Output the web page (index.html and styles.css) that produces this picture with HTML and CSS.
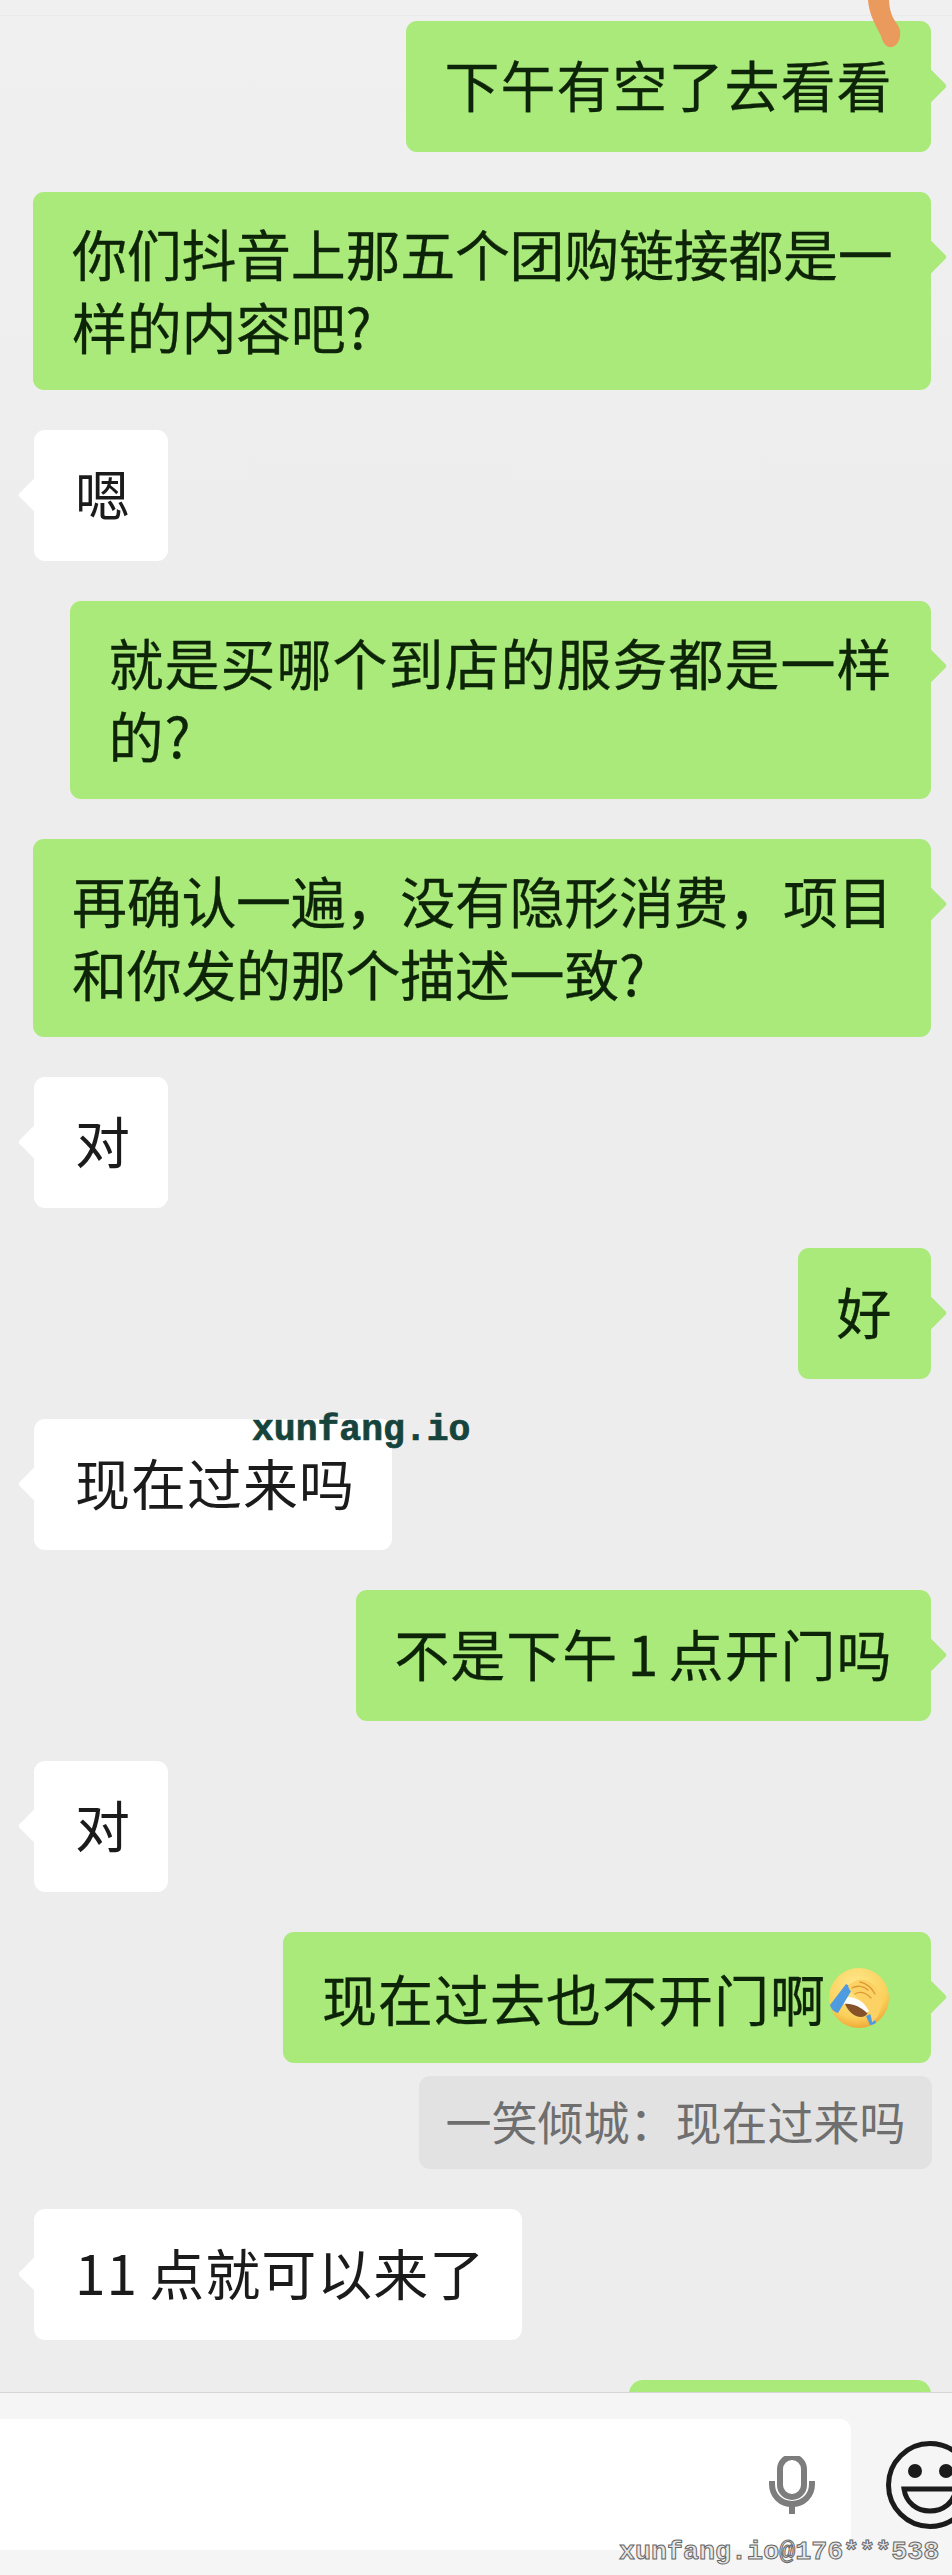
FILE: index.html
```html
<!DOCTYPE html>
<html lang="zh-CN">
<head>
  <meta charset="UTF-8">
  <title>聊天记录</title>
  <meta name="viewport" content="width=device-width, initial-scale=1">
  <link rel="stylesheet" href="styles.css">
</head>
<body>

  <div class="page">
    <div class="chat">
      <div class="topline"></div>

      <div class="msg sent"><div class="bubble">下午有空了去看看</div></div>
      <div class="msg sent"><div class="bubble tight two">你们抖音上那五个团购链接都是一<br>样的内容吧?</div></div>
      <div class="msg received"><div class="bubble">嗯</div></div>
      <div class="msg sent"><div class="bubble two">就是买哪个到店的服务都是一样<br>的?</div></div>
      <div class="msg sent"><div class="bubble tight two">再确认一遍，没有隐形消费，项目<br>和你发的那个描述一致?</div></div>
      <div class="msg received"><div class="bubble">对</div></div>
      <div class="msg sent"><div class="bubble">好</div></div>
      <div class="msg received"><div class="bubble">现在过来吗</div></div>
      <div class="msg sent"><div class="bubble spaced">不是下午 1 点开门吗</div></div>
      <div class="msg received"><div class="bubble">对</div></div>
      <div class="msg sent">
        <div class="bubble with-emoji">现在过去也不开门啊<svg class="emoji" viewBox="0 0 60 60">
            <defs>
              <radialGradient id="face" cx="45%" cy="30%" r="75%">
                <stop offset="0" stop-color="#fee98f"/>
                <stop offset="0.7" stop-color="#fbd05a"/>
                <stop offset="1" stop-color="#ee9f30"/>
              </radialGradient>
            </defs>
            <circle cx="30" cy="30" r="30" fill="url(#face)"/>
            <path d="M15 33 C22 29 33 34 39 44 C36 53 20 50 15 33 Z" fill="#85522a"/>
            <path d="M14 29 C24 28 35 33 41 42 L38 45 C32 39 23 35 15 36 Z" fill="#fff"/>
            <path d="M1 37 L17 16 L24 20 L9 45 C5 44 2 41 1 37 Z" fill="#4f9be0"/>
            <path d="M37 48 L44 45 L47 55 C45 56 43 57 41 57 Z" fill="#4f9be0"/>
            <path d="M19 18 C23 14 30 10 36 12 C43 14 49 19 52 26 C54 33 52 43 48 49 C46 52 44 54 43 54 C42 45 38 38 31 32 C26 28 21 24 19 18 Z" fill="#fcd264"/>
            <path d="M23 20 C28 17 35 18 39 22 M26 26 C31 23 37 25 42 30 M31 14 C37 15 43 20 46 26" fill="none" stroke="#dc9a35" stroke-width="1.3" stroke-linecap="round"/>
          </svg></div>
      </div>
      <div class="msg sent quote-row"><div class="quote">一笑倾城：现在过来吗</div></div>
      <div class="msg received"><div class="bubble wide-gap">11 点就可以来了</div></div>
      <div class="msg sent"><div class="bubble partial"></div></div>
    </div>

    <div class="footer">
      <div class="input">
        <svg class="mic" viewBox="0 0 46 58">
          <rect x="11" y="1" width="24" height="40" rx="12" fill="none" stroke="#7d7d7d" stroke-width="6"/>
          <path d="M3 25 V28 C3 40 12 48 23 48 C34 48 43 40 43 28 V25" fill="none" stroke="#7d7d7d" stroke-width="6"/>
          <rect x="20" y="47" width="6" height="11" fill="#7d7d7d"/>
        </svg>
      </div>
      <svg class="smiley" viewBox="0 0 88 88">
        <circle cx="44" cy="44" r="41.5" fill="none" stroke="#1b1b1b" stroke-width="5"/>
        <circle cx="29" cy="30" r="7" fill="#1b1b1b"/>
        <circle cx="60" cy="30" r="7" fill="#1b1b1b"/>
        <path d="M18 48 H70 C68 62 57 70 44 70 C31 70 20 62 18 48 Z" fill="none" stroke="#1b1b1b" stroke-width="5"/>
      </svg>
    </div>

    <svg class="smear" viewBox="0 0 40 50">
      <path d="M2 0 C3 14 9 24 15 36 C17 44 21 48 26 47 C32 46 35 38 34 30 C32 22 24 20 23 0 Z" fill="#ea9a5c"/>
    </svg>
    <div class="mark">xunfang.io</div>
    <div class="mark-user">xunfang.io@176***538</div>
  </div>

</body>
</html>
```

FILE: styles.css
```css
/* General Styles */
body {
  margin: 0;
  background-color: #eeedee;
  font-family: "Noto Sans CJK SC", "Noto Sans", sans-serif;
}

.page {
  position: relative;
  width: 952px;
  height: 2575px;
  overflow: hidden;
}

.chat {
  display: flex;
  flex-direction: column;
  gap: 40px;
  height: 2392px;
  padding: 0 21px 0 34px;
  box-sizing: border-box;
  overflow: hidden;
  background: linear-gradient(#f0f0f1, #eeedee 600px);
}

.topline {
  height: 15px;
  margin: 0 -21px -35px -34px;
  border-bottom: 1px solid #e9e9ea;
  flex-shrink: 0;
}

.msg {
  display: flex;
  flex-shrink: 0;
}

.sent {
  justify-content: flex-end;
}

.received {
  justify-content: flex-start;
}

/* Bubbles */
.bubble {
  position: relative;
  padding: 26px 38.5px 32px;
  font-size: 55px;
  line-height: 73px;
  letter-spacing: 1px;
  white-space: nowrap;
  border-radius: 11px;
}

.bubble.two {
  padding-top: 24px;
  padding-bottom: 28px;
}

.bubble.tight {
  letter-spacing: -0.3px;
}

.bubble.spaced {
  word-spacing: -4px;
}

.bubble.wide-gap {
  word-spacing: -2px;
}

.sent .bubble {
  background-color: #a9ea7a;
  color: #0d2408;
  -webkit-text-stroke: 0.3px #0d2408;
}

.received .bubble {
  padding-left: 41px;
  padding-right: 37px;
  background-color: #fff;
  color: #1b1b1b;
}

.bubble::after {
  content: "";
  position: absolute;
  top: 52px;
  width: 26px;
  height: 26px;
  background-color: inherit;
  border-radius: 3px;
  transform: rotate(45deg);
}

.sent .bubble::after {
  right: -11px;
}

.received .bubble::after {
  left: -11px;
}

.with-emoji {
  display: flex;
  align-items: center;
  padding-right: 42px;
  padding-top: 29px;
  padding-bottom: 29px;
}

.emoji {
  width: 60px;
  height: 60px;
  margin-left: 3px;
  flex-shrink: 0;
}

.partial {
  width: 302px;
  height: 60px;
  box-sizing: border-box;
  border-radius: 14px;
}

.partial::after {
  display: none;
}

/* Quoted reply */
.quote-row {
  margin-top: -27px;
  margin-right: -1px;
}

.quote {
  padding: 11px 26.5px 15px;
  font-size: 46px;
  line-height: 67px;
  color: #6f6f6f;
  background-color: #e2e2e3;
  border-radius: 11px;
  white-space: nowrap;
}

/* Input bar */
.footer {
  display: flex;
  align-items: flex-start;
  gap: 35px;
  height: 183px;
  padding-top: 26px;
  box-sizing: border-box;
  overflow: hidden;
  background-color: #f6f5f6;
  border-top: 1px solid #d6d6d6;
}

.input {
  display: flex;
  align-items: center;
  justify-content: flex-end;
  width: 851px;
  height: 131px;
  padding-right: 36px;
  box-sizing: border-box;
  background-color: #fff;
  border-radius: 0 11px 11px 0;
  flex-shrink: 0;
}

.mic {
  width: 46px;
  height: 58px;
}

.smiley {
  width: 88px;
  height: 88px;
  margin-top: 22px;
  flex-shrink: 0;
}

/* Overlays */
.smear {
  position: absolute;
  top: 0;
  left: 866px;
  width: 40px;
  height: 50px;
}

.mark {
  position: absolute;
  top: 1409px;
  left: 252px;
  font-family: "Liberation Mono", monospace;
  font-size: 36.4px;
  font-weight: bold;
  line-height: 44px;
  color: #16443c;
  -webkit-text-stroke: 0.7px #16443c;
}

.mark-user {
  position: absolute;
  top: 2536px;
  left: 619px;
  font-family: "Liberation Mono", monospace;
  font-size: 26.7px;
  font-weight: bold;
  line-height: 32px;
  color: #e8e8e8;
  -webkit-text-stroke: 1px #666;
}
```
